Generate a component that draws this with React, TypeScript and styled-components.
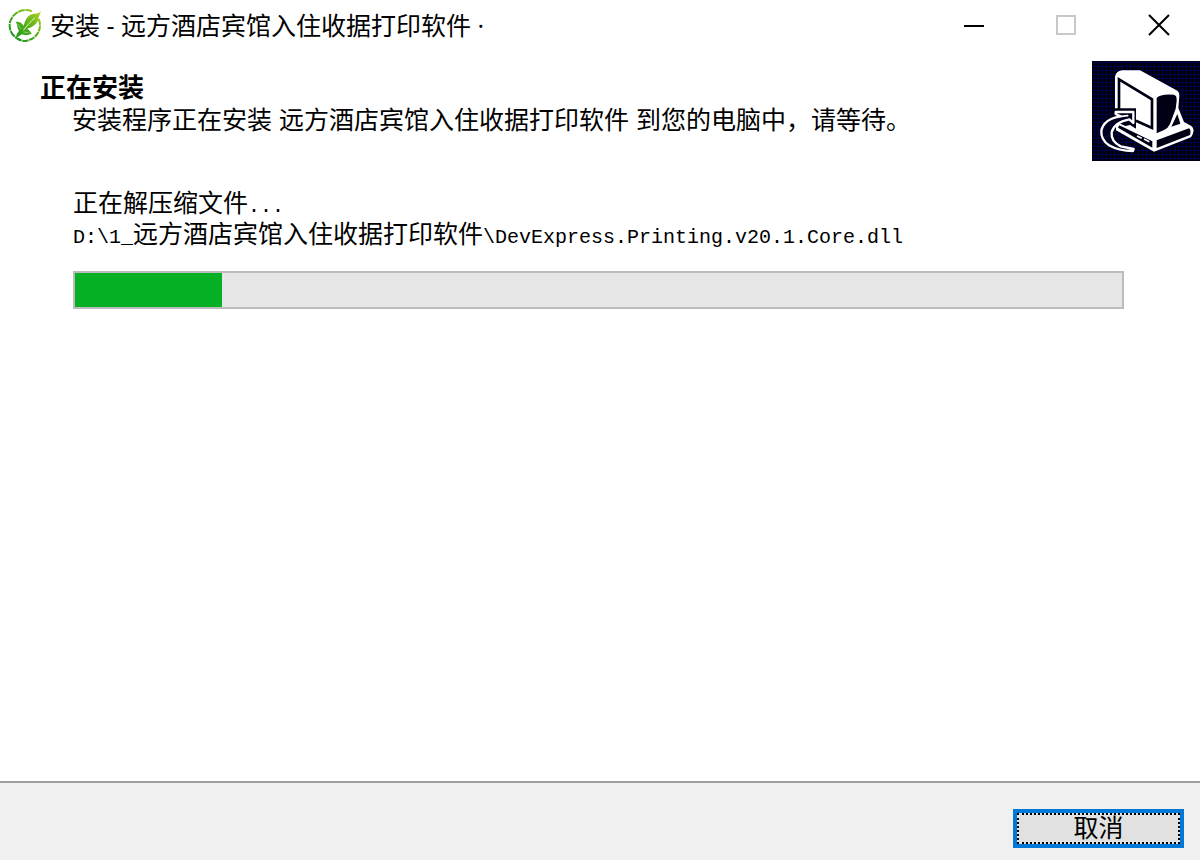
import React from "react";
import styled, { createGlobalStyle } from "styled-components";

const PRODUCT = "远方酒店宾馆入住收据打印软件";

const GlobalStyle = createGlobalStyle`
  * { box-sizing: border-box; }
  body {
    margin: 0;
    background: #ffffff;
    color: #000000;
    font-family: "Liberation Mono", "Noto Sans CJK SC", monospace;
  }
`;

const Window = styled.div`
  display: flex;
  flex-direction: column;
  min-height: 100vh;
`;

const TitleBar = styled.header`
  display: flex;
  align-items: center;
  height: 50px;
  padding-left: 8px;
`;

const AppTitle = styled.div`
  flex: 1;
  padding-left: 8px;
  font-family: "Open Sans", "Noto Sans CJK SC", sans-serif;
  font-size: 25px;
  line-height: 32px;
  white-space: nowrap;
`;

const CaptionButton = styled.button`
  display: flex;
  align-items: center;
  justify-content: center;
  width: 92px;
  height: 48px;
  padding: 0;
  border: 0;
  background: transparent;
`;

const CaptionButtons = styled.div`
  display: flex;
  margin-right: -5px;
`;

const Banner = styled.section`
  display: flex;
  justify-content: space-between;
  padding-top: 11px;
`;

const BannerText = styled.div`
  padding: 14px 0 0 40px;
`;

const Heading = styled.h1`
  margin: 0;
  font-size: 26px;
  line-height: 30px;
  font-weight: 700;
`;

const Line = styled.p`
  margin: 0;
  font-size: 25px;
  line-height: 30px;
  white-space: nowrap;
`;

const Description = styled(Line)`
  padding-left: 32px;
  font-family: "Liberation Sans", "Noto Sans CJK SC", sans-serif;
`;

const Latin = styled.span`
  font-size: 20px;
`;

const Status = styled.main`
  flex: 1;
  padding: 30px 76px 32px 73px;
`;

const Track = styled.div`
  height: 38px;
  margin-top: 18px;
  border: 2px solid #bcbcbc;
  background: #e6e6e6;
`;

const Fill = styled.div`
  height: 100%;
  background: #06b025;
`;

const Footer = styled.footer`
  display: flex;
  justify-content: flex-end;
  padding: 26px 16px 12px;
  border-top: 2px solid #a0a0a0;
  background: #f0f0f0;
`;

const CancelButton = styled.button`
  width: 171px;
  height: 39px;
  padding: 0;
  border: 4px solid #0078d7;
  background: #e1e1e1;
  color: #000000;
  font-family: "Noto Sans CJK SC", sans-serif;
  font-size: 25px;
  line-height: 22px;
`;

const FocusRing = styled.span`
  display: block;
  height: 31px;
  border: 2px dotted #000000;
`;

function AppIcon() {
  return (
    <svg width="34" height="36" viewBox="22 18 102 108" aria-hidden="true">
      <defs>
        <linearGradient id="leaf" gradientUnits="userSpaceOnUse" x1="40" y1="115" x2="120" y2="32">
          <stop offset="0" stopColor="#16961c" />
          <stop offset="0.5" stopColor="#55ae18" />
          <stop offset="1" stopColor="#b4d224" />
        </linearGradient>
      </defs>
      <g fill="none" stroke="url(#leaf)">
        <path d="M94 31 C62 17 27 42 27 74 C27 96 43 112 62 118" strokeWidth="6" strokeDasharray="20 2" />
        <path d="M114 54 C126 82 110 113 78 119 C68 121 58 118 50 113" strokeWidth="6" strokeDasharray="18 2" />
      </g>
      <path
        fill="url(#leaf)"
        d="M121 31 C112 42 97 35 85 44 C76 51 73 60 69 74 C63 65 54 61 45 63 C51 69 48 80 55 89 C51 94 48 99 46 107 C52 110 57 105 63 100 C72 104 84 102 93 98 C89 91 85 86 80 83 C94 79 108 71 112 57 C114 47 117 42 121 31 Z"
      />
      <path d="M68 88 C78 76 89 62 103 50" fill="none" stroke="#e4f3c8" strokeWidth="3" />
      <path d="M51 69 L61 84 M68 93 L83 95" fill="none" stroke="#b4dda0" strokeWidth="2" />
    </svg>
  );
}

function SetupArt() {
  return (
    <svg width="108" height="100" viewBox="6 9 324 300" aria-hidden="true">
      <defs>
        <pattern id="dither" width="12" height="12" patternUnits="userSpaceOnUse">
          <rect width="12" height="12" fill="#00000c" />
          <path d="M0 0h3v12h-3zM0 0h12v3h-12z" fill="#00003c" />
          <path d="M0 0h3v3h-3z" fill="#000070" />
        </pattern>
      </defs>
      <rect x="6" y="9" width="324" height="300" fill="url(#dither)" />
      <path
        d="M75 56 Q78 40 96 37 H150 L262 98 Q269 103 268 114 L265 150 L282 192 L304 204 Q314 212 309 226 Q306 238 297 240 L192 281 L78 217 V190 H75 Z"
        fill="#ffffff"
      />
      <g fill="#000014">
        <path d="M200 120 Q210 107 252 110 Q261 112 260 128 L257 152 L240 198 Q234 211 222 216 L200 226 Z" />
        <path d="M262 168 L271 197 L244 206 Z" />
        <path d="M200 247 L297 211 Q304 215 300 231 L200 270 Z" />
        <path d="M88 202 L187 250 V269 L84 209 Z" />
      </g>
      <path d="M87 158 V64 L186 124 V210 L138 188" fill="none" stroke="#000014" strokeWidth="8" />
      <path d="M141 234 L155 241 M162 243 L178 251" fill="none" stroke="#ffffff" strokeWidth="5" />
      <path d="M68 151 H138 V212 L120 201 L106 204 L74 190 Z" fill="#000014" />
      <g fill="none" stroke="#ffffff" strokeWidth="7" strokeLinejoin="round" strokeLinecap="round">
        <path
          d="M77 162 H130 V195 L118 184 Q72 193 65 223 Q62 250 92 265 L131 273 L129 279 Q86 279 57 262 Q32 245 34 218 Q41 183 92 175 L77 168 Z"
          fill="#000020"
        />
        <path d="M94 175 L113 173" strokeWidth="5" />
      </g>
    </svg>
  );
}

export default function App() {
  const progress = 14;
  return (
    <Window>
      <GlobalStyle />
      <TitleBar>
        <AppIcon />
        <AppTitle>安装 - {PRODUCT} ·</AppTitle>
        <CaptionButtons>
          <CaptionButton type="button" aria-label="最小化">
            <svg width="24" height="22" viewBox="0 0 24 22">
              <path d="M1 12H21" stroke="#000000" strokeWidth="2" />
            </svg>
          </CaptionButton>
          <CaptionButton type="button" aria-label="最大化" disabled>
            <svg width="24" height="22" viewBox="0 0 24 22">
              <rect x="2" y="2" width="18" height="18" fill="none" stroke="#c8c8c8" strokeWidth="2" />
            </svg>
          </CaptionButton>
          <CaptionButton type="button" aria-label="关闭">
            <svg width="22" height="22" viewBox="0 0 22 22">
              <path d="M1 1L21 21M21 1L1 21" stroke="#000000" strokeWidth="2" />
            </svg>
          </CaptionButton>
        </CaptionButtons>
      </TitleBar>
      <Banner>
        <BannerText>
          <Heading>正在安装</Heading>
          <Description>安装程序正在安装 {PRODUCT} 到您的电脑中，请等待。</Description>
        </BannerText>
        <SetupArt />
      </Banner>
      <Status>
        <Line>
          正在解压缩文件<Latin>...</Latin>
        </Line>
        <Line>
          <Latin>D:\1_</Latin>
          {PRODUCT}
          <Latin>\DevExpress.Printing.v20.1.Core.dll</Latin>
        </Line>
        <Track role="progressbar" aria-label="安装进度" aria-valuemin={0} aria-valuemax={100} aria-valuenow={progress}>
          <Fill style={{ width: `${progress}%` }} />
        </Track>
      </Status>
      <Footer>
        <CancelButton type="button">
          <FocusRing>取消</FocusRing>
        </CancelButton>
      </Footer>
    </Window>
  );
}
